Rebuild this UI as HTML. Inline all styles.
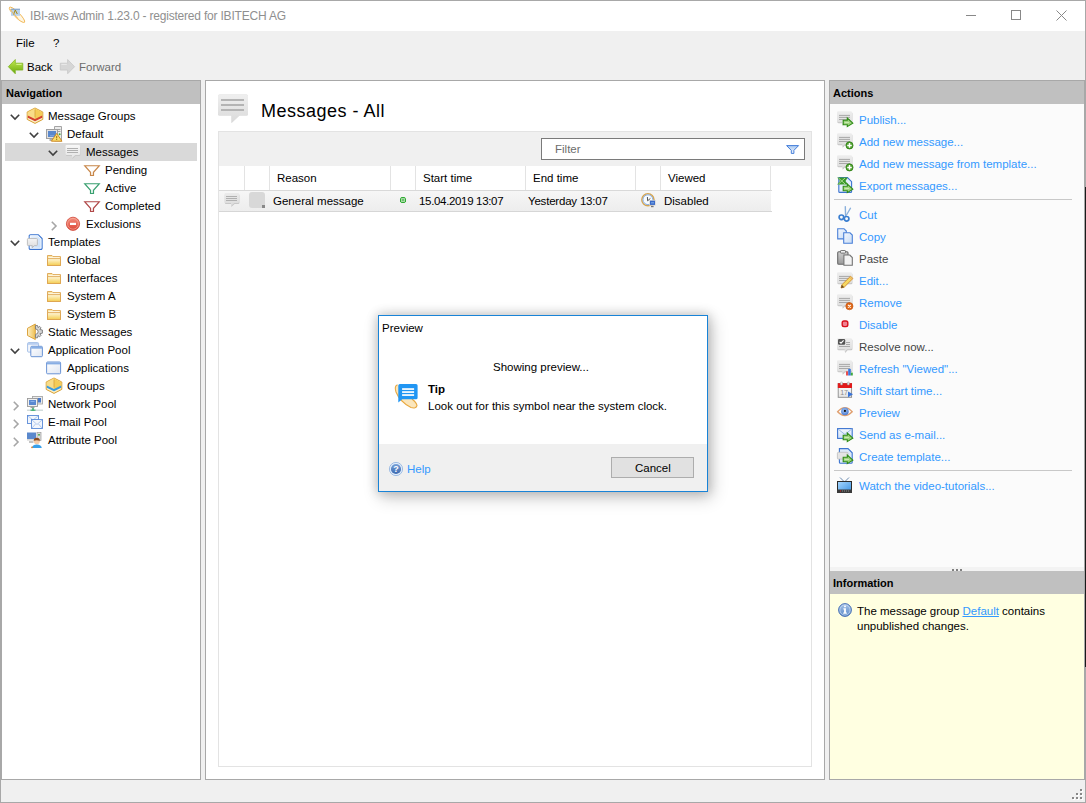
<!DOCTYPE html>
<html><head><meta charset="utf-8"><style>
html,body{margin:0;padding:0;}
body{width:1086px;height:803px;position:relative;overflow:hidden;background:#f0f0f0;font-family:"Liberation Sans", sans-serif;}
.t{position:absolute;white-space:pre;height:14px;}
svg{overflow:visible}
</style></head><body>
<div style="position:absolute;left:0px;top:0px;width:1086px;height:803px;box-sizing:border-box;border:1px solid #a8a8a8;background:#f0f0f0"></div><div style="position:absolute;left:1px;top:1px;width:1084px;height:30px;background:#fff"></div><svg style="position:absolute;left:9px;top:7px" width="16" height="16" viewBox="0 0 16 16"><ellipse cx="8" cy="7.8" rx="10.6" ry="2.6" transform="rotate(45 8 7.8)" fill="#fef6e4" stroke="#f0b550" stroke-width="0.9"/>
<rect x="2" y="1.8" width="9" height="7" fill="#b4d0ee" opacity="0.95"/><rect x="2" y="1.8" width="9" height="0.8" fill="#7090b8"/>
<path d="M4.5 7.5 L6.3 3 L8.3 7" fill="none" stroke="#a88a10" stroke-width="1"/>
<path d="M1.2 2.2 Q3.5 6 9 11.5" fill="none" stroke="#f0b550" stroke-width="0.9"/></svg><div class="t" style="left:30px;top:9px;font-size:12px;line-height:14px;color:#8f8f8f;font-weight:400;letter-spacing:-0.2px">IBI-aws Admin 1.23.0 - registered for IBITECH AG</div><div style="position:absolute;left:966px;top:15px;width:10px;height:1px;background:#888"></div><div style="position:absolute;left:1011px;top:10px;width:10px;height:10px;box-sizing:border-box;border:1px solid #888"></div><svg style="position:absolute;left:1056px;top:10px" width="11" height="11" viewBox="0 0 11 11"><path d="M0.5 0.5 L10.5 10.5 M10.5 0.5 L0.5 10.5" stroke="#888" stroke-width="1"/></svg><div class="t" style="left:16px;top:36px;font-size:11.5px;line-height:14px;color:#000;font-weight:400;">File</div><div class="t" style="left:53px;top:36px;font-size:11.5px;line-height:14px;color:#000;font-weight:400;">?</div><svg style="position:absolute;left:8px;top:59px" width="16" height="16" viewBox="0 0 16 16"><defs><linearGradient id="bag" x1="0" y1="0" x2="0" y2="1"><stop offset="0" stop-color="#c4ea50"/><stop offset="1" stop-color="#6aaa10"/></linearGradient></defs>
<path d="M0.3 7.7 L7.3 0.5 V4.2 H14.8 V11.1 H7.3 V14.8Z" fill="url(#bag)" stroke="#78b018" stroke-width="0.7" stroke-linejoin="round"/>
<path d="M8.3 5.4 H13.6" stroke="#e0f8a0" stroke-width="0.9"/></svg><div class="t" style="left:27px;top:60px;font-size:11.5px;line-height:14px;color:#000;font-weight:400;">Back</div><svg style="position:absolute;left:60px;top:59px" width="16" height="16" viewBox="0 0 16 16"><path d="M14.6 7.7 L7.6 0.5 V4.2 H0.3 V11.1 H7.6 V14.8Z" fill="#d6d6d6" stroke="#c4c4c4" stroke-width="0.7" stroke-linejoin="round"/>
<path d="M1.4 5.4 H6.8" stroke="#ececec" stroke-width="0.9"/></svg><div class="t" style="left:79px;top:60px;font-size:11.5px;line-height:14px;color:#6d6d6d;font-weight:400;">Forward</div><div style="position:absolute;left:1px;top:80px;width:200px;height:700px;box-sizing:border-box;border:1px solid #a8a8a8;background:#fff"></div><div style="position:absolute;left:2px;top:81px;width:198px;height:23px;background:#c0c0c0"></div><div class="t" style="left:6px;top:86px;font-size:11px;line-height:14px;color:#000;font-weight:700;">Navigation</div><svg style="position:absolute;left:10.0px;top:113.5px" width="10" height="6" viewBox="0 0 10 6"><path d="M0.8 0.8 L5 5 L9.2 0.8" fill="none" stroke="#404040" stroke-width="1.6"/></svg><svg style="position:absolute;left:27px;top:107px" width="16" height="17" viewBox="0 0 16 17"><path d="M8 1 L15.8 5 V12.4 L8 16.4 L0.2 12.4 V5Z" fill="#fcefc4" stroke="#d8a238" stroke-width="1"/>
<path d="M8 1.6 L15.2 5.3 V9.6 L8 13.1 L0.8 9.6 V5.3Z" fill="#f5cc58"/>
<path d="M8 1.6 L0.8 5.3 V9.6 L8 13.1Z" fill="#f8dc88"/>
<path d="M0.8 8.6 L8 12 L15.2 8.6 V10.8 L8 14.2 L0.8 10.8Z" fill="#d4402e"/>
<path d="M8 2.5 V10.5" stroke="#d49a30" stroke-width="0.7"/></svg><div class="t" style="left:48px;top:109px;font-size:11.5px;line-height:14px;color:#000;font-weight:400;">Message Groups</div><svg style="position:absolute;left:29.0px;top:131.5px" width="10" height="6" viewBox="0 0 10 6"><path d="M0.8 0.8 L5 5 L9.2 0.8" fill="none" stroke="#404040" stroke-width="1.6"/></svg><svg style="position:absolute;left:46px;top:125px" width="16" height="17" viewBox="0 0 16 17"><path d="M8.5 1.5 H15.5 V16 H8.5Z" fill="#ececec" stroke="#a4a4a4" stroke-width="1"/>
<rect x="10" y="4" width="4.5" height="0.9" fill="#9a9a9a"/><rect x="10" y="6" width="4.5" height="0.9" fill="#9a9a9a"/>
<rect x="0.5" y="4.5" width="11" height="9" fill="#e2e2e2" stroke="#a0a0a0" stroke-width="1"/>
<rect x="2" y="6" width="8" height="6" fill="#5a88cc"/><rect x="4" y="10.5" width="4" height="0.7" fill="#9ab8e8"/>
<path d="M3.5 15 h2.5" stroke="#7a7a7a" stroke-width="1.2"/>
<path d="M10.7 8.4 L16 16.2 H5.4Z" fill="#fbe06a" stroke="#d08a28" stroke-width="1" stroke-linejoin="round"/>
<rect x="10.2" y="11" width="1" height="2.4" fill="#9a6a10"/><rect x="10.2" y="14" width="1" height="1" fill="#9a6a10"/>
<circle cx="13.6" cy="9.2" r="1" fill="#3aa83a"/></svg><div class="t" style="left:67px;top:127px;font-size:11.5px;line-height:14px;color:#000;font-weight:400;">Default</div><div style="position:absolute;left:5px;top:143px;width:192px;height:18px;background:#d9d9d9"></div><svg style="position:absolute;left:48.0px;top:149.5px" width="10" height="6" viewBox="0 0 10 6"><path d="M0.8 0.8 L5 5 L9.2 0.8" fill="none" stroke="#404040" stroke-width="1.6"/></svg><svg style="position:absolute;left:65px;top:144px" width="16" height="16" viewBox="0 0 16 16"><defs><linearGradient id="bggl" x1="0" y1="0" x2="0" y2="1"><stop offset="0" stop-color="#f8f8f8"/><stop offset="1" stop-color="#e4e4e4"/></linearGradient>
<filter id="bgs" x="-30%" y="-30%" width="160%" height="160%"><feGaussianBlur stdDeviation="0.7"/></filter></defs>
<path d="M1.8 1.5 h12 a1.3 1.3 0 0 1 1.3 1.3 v7.4 a1.3 1.3 0 0 1 -1.3 1.3 h-3.5 l-3.3 3 v-3 h-5.2 a1.3 1.3 0 0 1 -1.3 -1.3 v-7.4 a1.3 1.3 0 0 1 1.3 -1.3z" fill="#c8c8c8" filter="url(#bgs)" transform="translate(0.3,0.6)"/>
<path d="M1.8 1 h12 a1.3 1.3 0 0 1 1.3 1.3 v7.4 a1.3 1.3 0 0 1 -1.3 1.3 h-3.5 l-3.3 3 v-3 h-5.2 a1.3 1.3 0 0 1 -1.3 -1.3 v-7.4 a1.3 1.3 0 0 1 1.3 -1.3z" fill="url(#bggl)"/>
<rect x="2" y="4" width="11" height="1" fill="#b0b0b0"/><rect x="2" y="6" width="11" height="1" fill="#b0b0b0"/><rect x="2" y="8" width="11" height="1" fill="#b0b0b0"/></svg><div class="t" style="left:86px;top:145px;font-size:11.5px;line-height:14px;color:#000;font-weight:400;">Messages</div><svg style="position:absolute;left:84px;top:165px" width="16" height="12" viewBox="0 0 16 12"><defs><linearGradient id="fg165" x1="0" y1="0" x2="1" y2="1"><stop offset="0.5" stop-color="#ffffff"/><stop offset="1" stop-color="#e8c8a8"/></linearGradient></defs>
<path d="M0.7 0.7 H15.3 L9.5 7.3 V10.5 H6.5 V7.3 Z" fill="url(#fg165)" stroke="#c8874a" stroke-width="1.15" stroke-linejoin="miter"/></svg><div class="t" style="left:105px;top:163px;font-size:11.5px;line-height:14px;color:#000;font-weight:400;">Pending</div><svg style="position:absolute;left:84px;top:183px" width="16" height="12" viewBox="0 0 16 12"><defs><linearGradient id="fg183" x1="0" y1="0" x2="1" y2="1"><stop offset="0.5" stop-color="#ffffff"/><stop offset="1" stop-color="#a8e0c8"/></linearGradient></defs>
<path d="M0.7 0.7 H15.3 L9.5 7.3 V10.5 H6.5 V7.3 Z" fill="url(#fg183)" stroke="#3aa070" stroke-width="1.15" stroke-linejoin="miter"/></svg><div class="t" style="left:105px;top:181px;font-size:11.5px;line-height:14px;color:#000;font-weight:400;">Active</div><svg style="position:absolute;left:84px;top:201px" width="16" height="12" viewBox="0 0 16 12"><defs><linearGradient id="fg201" x1="0" y1="0" x2="1" y2="1"><stop offset="0.5" stop-color="#ffffff"/><stop offset="1" stop-color="#e8b0b0"/></linearGradient></defs>
<path d="M0.7 0.7 H15.3 L9.5 7.3 V10.5 H6.5 V7.3 Z" fill="url(#fg201)" stroke="#b04848" stroke-width="1.15" stroke-linejoin="miter"/></svg><div class="t" style="left:105px;top:199px;font-size:11.5px;line-height:14px;color:#000;font-weight:400;">Completed</div><svg style="position:absolute;left:50.5px;top:220.5px" width="6" height="10" viewBox="0 0 6 10"><path d="M0.8 0.8 L5 5 L0.8 9.2" fill="none" stroke="#a6a6a6" stroke-width="1.6"/></svg><svg style="position:absolute;left:65px;top:216px" width="16" height="16" viewBox="0 0 16 16"><defs><linearGradient id="exg" x1="0" y1="0" x2="0" y2="1"><stop offset="0" stop-color="#f49080"/><stop offset="1" stop-color="#dc4434"/></linearGradient></defs>
<circle cx="8" cy="7.8" r="6.6" fill="url(#exg)" stroke="#d04838" stroke-width="0.8"/><circle cx="8" cy="7.8" r="5.4" fill="none" stroke="#f8b8a8" stroke-width="0.6"/>
<rect x="5" y="6.8" width="6" height="2.2" fill="#fff"/></svg><div class="t" style="left:86px;top:217px;font-size:11.5px;line-height:14px;color:#000;font-weight:400;">Exclusions</div><svg style="position:absolute;left:10.0px;top:239.5px" width="10" height="6" viewBox="0 0 10 6"><path d="M0.8 0.8 L5 5 L9.2 0.8" fill="none" stroke="#404040" stroke-width="1.6"/></svg><svg style="position:absolute;left:27px;top:234px" width="16" height="16" viewBox="0 0 16 16"><defs><linearGradient id="tpg" x1="0" y1="0" x2="1" y2="1"><stop offset="0" stop-color="#e8f2fe"/><stop offset="1" stop-color="#c4dcf8"/></linearGradient>
<linearGradient id="tpb" x1="0" y1="0" x2="0" y2="1"><stop offset="0" stop-color="#f4f4f4"/><stop offset="1" stop-color="#dcdcdc"/></linearGradient></defs>
<path d="M3.2 0.7 H11.3 L15.1 4.5 V14.2 a1.2 1.2 0 0 1 -1.2 1.2 H3.4 a1.2 1.2 0 0 1 -1.2 -1.2 V1.9 a1.2 1.2 0 0 1 1.2 -1.2Z" fill="url(#tpg)" stroke="#3a74d0" stroke-width="1.1"/>
<path d="M3.3 1.8 H10.8 L14 5 V14.2 H3.3Z" fill="none" stroke="#ffffff" stroke-width="0.7"/>
<path d="M1.3 4.5 h8.2 a0.9 0.9 0 0 1 0.9 0.9 v5.3 a0.9 0.9 0 0 1 -0.9 0.9 h-2.2 l-2 2.2 v-2.2 h-4 a0.9 0.9 0 0 1 -0.9 -0.9 v-5.3 a0.9 0.9 0 0 1 0.9 -0.9z" fill="url(#tpb)" stroke="#b4b4b4" stroke-width="0.8"/></svg><div class="t" style="left:48px;top:235px;font-size:11.5px;line-height:14px;color:#000;font-weight:400;">Templates</div><svg style="position:absolute;left:47px;top:254px" width="16" height="16" viewBox="0 0 16 16"><defs><linearGradient id="fold" x1="0" y1="0" x2="0" y2="1"><stop offset="0" stop-color="#fff8dc"/><stop offset="1" stop-color="#f4cc50"/></linearGradient></defs>
<path d="M0.5 1.5 H5 L6 2.6 H13.5 V11.5 H0.5Z" fill="#fbe6a8" stroke="#dca450" stroke-width="0.9"/>
<path d="M0.5 4.6 H13.5 V11.5 H0.5Z" fill="url(#fold)" stroke="#dca450" stroke-width="0.9"/>
<path d="M1.5 3.6 H12.5" stroke="#fffaf0" stroke-width="0.8"/></svg><div class="t" style="left:67px;top:253px;font-size:11.5px;line-height:14px;color:#000;font-weight:400;">Global</div><svg style="position:absolute;left:47px;top:272px" width="16" height="16" viewBox="0 0 16 16"><defs><linearGradient id="fold" x1="0" y1="0" x2="0" y2="1"><stop offset="0" stop-color="#fff8dc"/><stop offset="1" stop-color="#f4cc50"/></linearGradient></defs>
<path d="M0.5 1.5 H5 L6 2.6 H13.5 V11.5 H0.5Z" fill="#fbe6a8" stroke="#dca450" stroke-width="0.9"/>
<path d="M0.5 4.6 H13.5 V11.5 H0.5Z" fill="url(#fold)" stroke="#dca450" stroke-width="0.9"/>
<path d="M1.5 3.6 H12.5" stroke="#fffaf0" stroke-width="0.8"/></svg><div class="t" style="left:67px;top:271px;font-size:11.5px;line-height:14px;color:#000;font-weight:400;">Interfaces</div><svg style="position:absolute;left:47px;top:290px" width="16" height="16" viewBox="0 0 16 16"><defs><linearGradient id="fold" x1="0" y1="0" x2="0" y2="1"><stop offset="0" stop-color="#fff8dc"/><stop offset="1" stop-color="#f4cc50"/></linearGradient></defs>
<path d="M0.5 1.5 H5 L6 2.6 H13.5 V11.5 H0.5Z" fill="#fbe6a8" stroke="#dca450" stroke-width="0.9"/>
<path d="M0.5 4.6 H13.5 V11.5 H0.5Z" fill="url(#fold)" stroke="#dca450" stroke-width="0.9"/>
<path d="M1.5 3.6 H12.5" stroke="#fffaf0" stroke-width="0.8"/></svg><div class="t" style="left:67px;top:289px;font-size:11.5px;line-height:14px;color:#000;font-weight:400;">System A</div><svg style="position:absolute;left:47px;top:308px" width="16" height="16" viewBox="0 0 16 16"><defs><linearGradient id="fold" x1="0" y1="0" x2="0" y2="1"><stop offset="0" stop-color="#fff8dc"/><stop offset="1" stop-color="#f4cc50"/></linearGradient></defs>
<path d="M0.5 1.5 H5 L6 2.6 H13.5 V11.5 H0.5Z" fill="#fbe6a8" stroke="#dca450" stroke-width="0.9"/>
<path d="M0.5 4.6 H13.5 V11.5 H0.5Z" fill="url(#fold)" stroke="#dca450" stroke-width="0.9"/>
<path d="M1.5 3.6 H12.5" stroke="#fffaf0" stroke-width="0.8"/></svg><div class="t" style="left:67px;top:307px;font-size:11.5px;line-height:14px;color:#000;font-weight:400;">System B</div><svg style="position:absolute;left:27px;top:323px" width="16" height="17" viewBox="0 0 16 17"><defs><linearGradient id="smg" x1="0" y1="0" x2="1" y2="0"><stop offset="0" stop-color="#fdf0c8"/><stop offset="1" stop-color="#f0c050"/></linearGradient></defs>
<path d="M8.3 1 L0.5 5.3 V12.5 L8.3 16.5Z" fill="url(#smg)" stroke="#dca440" stroke-width="1"/>
<path d="M8.5 2.5 L10.5 2.5 L11 4.6 L12.6 3.4 L14 4.8 L12.9 6.5 L15.4 7 V10.2 L12.9 10.7 L14 12.4 L12.6 13.8 L11 12.7 L10.5 14.8 H8.5 V11.3 A2.6 2.6 0 0 0 8.5 6Z" fill="#d4d4d4" stroke="#7a7a7a" stroke-width="0.9" stroke-linejoin="round"/></svg><div class="t" style="left:48px;top:325px;font-size:11.5px;line-height:14px;color:#000;font-weight:400;">Static Messages</div><svg style="position:absolute;left:10.0px;top:347.5px" width="10" height="6" viewBox="0 0 10 6"><path d="M0.8 0.8 L5 5 L9.2 0.8" fill="none" stroke="#404040" stroke-width="1.6"/></svg><svg style="position:absolute;left:27px;top:342px" width="16" height="16" viewBox="0 0 16 16"><defs><linearGradient id="apg2" x1="0" y1="0" x2="1" y2="1"><stop offset="0" stop-color="#ffffff"/><stop offset="1" stop-color="#dfe6f2"/></linearGradient></defs>
<rect x="0.6" y="0.6" width="11" height="9.5" rx="1" fill="#f4f7fc" stroke="#9ab8e4" stroke-width="0.9"/><rect x="1" y="1" width="10.2" height="1.8" fill="#b8cef0"/>
<rect x="3.8" y="4.3" width="11.6" height="10.4" rx="1" fill="url(#apg2)" stroke="#5a88d0" stroke-width="0.9"/><rect x="4.2" y="4.7" width="10.8" height="2" fill="#88aee4"/></svg><div class="t" style="left:48px;top:343px;font-size:11.5px;line-height:14px;color:#000;font-weight:400;">Application Pool</div><svg style="position:absolute;left:46px;top:360px" width="16" height="16" viewBox="0 0 16 16"><defs><linearGradient id="apg" x1="0" y1="0" x2="1" y2="1"><stop offset="0" stop-color="#ffffff"/><stop offset="1" stop-color="#dfe6f2"/></linearGradient></defs>
<rect x="0.6" y="2" width="14" height="11.8" rx="1" fill="url(#apg)" stroke="#5a88d0" stroke-width="0.9"/><rect x="1" y="2.4" width="13.2" height="2" fill="#88aee4"/></svg><div class="t" style="left:67px;top:361px;font-size:11.5px;line-height:14px;color:#000;font-weight:400;">Applications</div><svg style="position:absolute;left:46px;top:377px" width="16" height="17" viewBox="0 0 16 17"><path d="M8 1 L15.8 5 V12.4 L8 16.4 L0.2 12.4 V5Z" fill="#fcefc4" stroke="#d8a238" stroke-width="1"/>
<path d="M8 1.6 L15.2 5.3 V9.6 L8 13.1 L0.8 9.6 V5.3Z" fill="#f5cc58"/>
<path d="M8 1.6 L0.8 5.3 V9.6 L8 13.1Z" fill="#f8dc88"/>
<path d="M0.8 8.6 L8 12 L15.2 8.6 V10.8 L8 14.2 L0.8 10.8Z" fill="#3a9ae0"/>
<path d="M8 2.5 V10.5" stroke="#d49a30" stroke-width="0.7"/></svg><div class="t" style="left:67px;top:379px;font-size:11.5px;line-height:14px;color:#000;font-weight:400;">Groups</div><svg style="position:absolute;left:12.5px;top:400.5px" width="6" height="10" viewBox="0 0 6 10"><path d="M0.8 0.8 L5 5 L0.8 9.2" fill="none" stroke="#a6a6a6" stroke-width="1.6"/></svg><svg style="position:absolute;left:27px;top:396px" width="16" height="16" viewBox="0 0 16 16"><rect x="5.5" y="0.5" width="10" height="7.5" fill="#ececec" stroke="#a8a8a8" stroke-width="0.9"/><rect x="7" y="2" width="7" height="4.5" fill="#4a7ac8"/>
<rect x="0.5" y="2.5" width="10" height="8" fill="#f0f0f0" stroke="#9a9a9a" stroke-width="0.9"/><rect x="2" y="4" width="7" height="5" fill="#5a88d0"/><rect x="3.5" y="5" width="4" height="1" fill="#8ab0e8"/>
<path d="M3.5 11.6 h4" stroke="#9a9a9a" stroke-width="1"/>
<rect x="0" y="13.6" width="16" height="1.2" fill="#c8d4d4"/><rect x="5.2" y="11.8" width="1.6" height="3" fill="#40b070"/><rect x="3.5" y="13.6" width="5" height="1.2" fill="#40b070"/></svg><div class="t" style="left:48px;top:397px;font-size:11.5px;line-height:14px;color:#000;font-weight:400;">Network Pool</div><svg style="position:absolute;left:12.5px;top:418.5px" width="6" height="10" viewBox="0 0 6 10"><path d="M0.8 0.8 L5 5 L0.8 9.2" fill="none" stroke="#a6a6a6" stroke-width="1.6"/></svg><svg style="position:absolute;left:27px;top:414px" width="16" height="16" viewBox="0 0 16 16"><rect x="0.5" y="1.5" width="11" height="8" fill="#f2f6fc" stroke="#5a8ad8" stroke-width="0.9"/><path d="M1 2 L6 6 L11 2" fill="none" stroke="#a8c4ec" stroke-width="0.9"/>
<rect x="4.5" y="5.5" width="11" height="9" fill="#f2f6fc" stroke="#5a8ad8" stroke-width="0.9"/><path d="M5 6 L10 10.5 L15 6 M5 14 L8.5 10 M15 14 L11.5 10" fill="none" stroke="#a8c4ec" stroke-width="0.9"/></svg><div class="t" style="left:48px;top:415px;font-size:11.5px;line-height:14px;color:#000;font-weight:400;">E-mail Pool</div><svg style="position:absolute;left:12.5px;top:436.5px" width="6" height="10" viewBox="0 0 6 10"><path d="M0.8 0.8 L5 5 L0.8 9.2" fill="none" stroke="#a6a6a6" stroke-width="1.6"/></svg><svg style="position:absolute;left:27px;top:432px" width="16" height="16" viewBox="0 0 16 16"><rect x="10" y="0.5" width="4" height="8" fill="#dcdcdc" stroke="#9a9a9a" stroke-width="0.7"/><rect x="11.2" y="2" width="1.6" height="1.6" fill="#40a840"/>
<rect x="0" y="0.5" width="9" height="6.5" fill="#5a88cc"/><rect x="0" y="7" width="9" height="1.6" fill="#d8d8d8"/><path d="M2 10 h4.5" stroke="#8a8a8a" stroke-width="1"/>
<circle cx="9.8" cy="9.3" r="3" fill="#f6cca8"/><path d="M6.7 8.8 a3.1 3 0 0 1 6.2 0 q-3.1 -1.1 -6.2 0z" fill="#8a4a20"/>
<path d="M4.8 16 q0.5 -3.6 5 -3.6 q4.5 0 5 3.6z" fill="#3aa0ea"/><circle cx="5" cy="15.3" r="0.9" fill="#e08030"/></svg><div class="t" style="left:48px;top:433px;font-size:11.5px;line-height:14px;color:#000;font-weight:400;">Attribute Pool</div><div style="position:absolute;left:205px;top:80px;width:620px;height:700px;box-sizing:border-box;border:1px solid #a8a8a8;background:#fff"></div><svg style="position:absolute;left:218px;top:94px" width="32" height="32" viewBox="0 0 32 32"><defs><linearGradient id="hb" x1="0" y1="0" x2="0" y2="1"><stop offset="0" stop-color="#efefef"/><stop offset="1" stop-color="#dadada"/></linearGradient>
<filter id="hsh" x="-20%" y="-20%" width="140%" height="140%"><feGaussianBlur stdDeviation="0.6"/></filter></defs>
<path d="M1.5 0.5 h27 a1.5 1.5 0 0 1 1.5 1.5 v18 a1.5 1.5 0 0 1 -1.5 1.5 h-7 l-8 7.5 v-7.5 h-12 a1.5 1.5 0 0 1 -1.5 -1.5 v-18 a1.5 1.5 0 0 1 1.5 -1.5z" fill="#d8d8d8" filter="url(#hsh)"/>
<path d="M1.5 0.5 h27 a1.5 1.5 0 0 1 1.5 1.5 v18 a1.5 1.5 0 0 1 -1.5 1.5 h-7 l-8 7.5 v-7.5 h-12 a1.5 1.5 0 0 1 -1.5 -1.5 v-18 a1.5 1.5 0 0 1 1.5 -1.5z" fill="url(#hb)"/>
<rect x="3" y="5" width="23" height="2" fill="#b4b4b4"/><rect x="3" y="10" width="23" height="2" fill="#b4b4b4"/><rect x="3" y="15" width="23" height="2" fill="#b4b4b4"/></svg><div class="t" style="left:261px;top:100px;font-size:18px;line-height:22px;color:#000;font-weight:400;letter-spacing:0.5px">Messages - All</div><div style="position:absolute;left:218px;top:131px;width:594px;height:636px;box-sizing:border-box;border:1px solid #e3e3e3;background:#fff"></div><div style="position:absolute;left:219px;top:132px;width:592px;height:34px;background:#f0f0f0"></div><div style="position:absolute;left:541px;top:138px;width:264px;height:22px;box-sizing:border-box;border:1px solid #7a7a7a;background:#fff"></div><div class="t" style="left:555px;top:142px;font-size:11.5px;line-height:14px;color:#6d6d6d;font-weight:400;">Filter</div><svg style="position:absolute;left:786px;top:145px" width="14" height="10" viewBox="0 0 14 10"><defs><linearGradient id="ffg" x1="0" y1="0" x2="0" y2="1"><stop offset="0" stop-color="#a8c8f0"/><stop offset="1" stop-color="#f4f8fe"/></linearGradient></defs>
<path d="M0.6 0.6 H12.6 L7.9 5.4 V8.4 H5.3 V5.4Z" fill="url(#ffg)" stroke="#3c78d8" stroke-width="0.95" stroke-linejoin="round"/></svg><div style="position:absolute;left:219px;top:166px;width:552px;height:24px;background:#fff"></div><div style="position:absolute;left:219px;top:190px;width:553px;height:1px;background:#d9d9d9"></div><div style="position:absolute;left:244px;top:166px;width:1px;height:24px;background:#e3e3e3"></div><div style="position:absolute;left:269px;top:166px;width:1px;height:24px;background:#e3e3e3"></div><div style="position:absolute;left:390px;top:166px;width:1px;height:24px;background:#e3e3e3"></div><div style="position:absolute;left:415px;top:166px;width:1px;height:24px;background:#e3e3e3"></div><div style="position:absolute;left:525px;top:166px;width:1px;height:24px;background:#e3e3e3"></div><div style="position:absolute;left:635px;top:166px;width:1px;height:24px;background:#e3e3e3"></div><div style="position:absolute;left:660px;top:166px;width:1px;height:24px;background:#e3e3e3"></div><div style="position:absolute;left:770px;top:166px;width:1px;height:24px;background:#e3e3e3"></div><div class="t" style="left:277px;top:171px;font-size:11.5px;line-height:14px;color:#000;font-weight:400;">Reason</div><div class="t" style="left:423px;top:171px;font-size:11.5px;line-height:14px;color:#000;font-weight:400;">Start time</div><div class="t" style="left:533px;top:171px;font-size:11.5px;line-height:14px;color:#000;font-weight:400;">End time</div><div class="t" style="left:668px;top:171px;font-size:11.5px;line-height:14px;color:#000;font-weight:400;">Viewed</div><div style="position:absolute;left:219px;top:191px;width:552px;height:20px;background:linear-gradient(#f6f6f6,#ededed)"></div><div style="position:absolute;left:219px;top:211px;width:553px;height:1px;background:#d6d6d6"></div><svg style="position:absolute;left:224px;top:192px" width="16" height="16" viewBox="0 0 16 16"><defs><linearGradient id="bgg" x1="0" y1="0" x2="0" y2="1"><stop offset="0" stop-color="#ebebeb"/><stop offset="1" stop-color="#dadada"/></linearGradient>
<filter id="bgs" x="-30%" y="-30%" width="160%" height="160%"><feGaussianBlur stdDeviation="0.7"/></filter></defs>
<path d="M1.8 1.5 h12 a1.3 1.3 0 0 1 1.3 1.3 v7.4 a1.3 1.3 0 0 1 -1.3 1.3 h-3.5 l-3.3 3 v-3 h-5.2 a1.3 1.3 0 0 1 -1.3 -1.3 v-7.4 a1.3 1.3 0 0 1 1.3 -1.3z" fill="#c8c8c8" filter="url(#bgs)" transform="translate(0.3,0.6)"/>
<path d="M1.8 1 h12 a1.3 1.3 0 0 1 1.3 1.3 v7.4 a1.3 1.3 0 0 1 -1.3 1.3 h-3.5 l-3.3 3 v-3 h-5.2 a1.3 1.3 0 0 1 -1.3 -1.3 v-7.4 a1.3 1.3 0 0 1 1.3 -1.3z" fill="url(#bgg)"/>
<rect x="2" y="4" width="11" height="1" fill="#b0b0b0"/><rect x="2" y="6" width="11" height="1" fill="#b0b0b0"/><rect x="2" y="8" width="11" height="1" fill="#b0b0b0"/></svg><svg style="position:absolute;left:249px;top:192px" width="16" height="16" viewBox="0 0 16 16"><rect x="0" y="0" width="16" height="16" rx="3" fill="#d8d8d8"/><rect x="13" y="13" width="3" height="3" fill="#888"/></svg><svg style="position:absolute;left:400px;top:197px" width="6" height="6" viewBox="0 0 6 6"><path d="M1.5 0 H4.5 L6 1.5 V4.5 L4.5 6 H1.5 L0 4.5 V1.5Z" fill="#2eaa30"/><rect x="1" y="1" width="4" height="4" rx="0.5" fill="#a6d8a6"/><rect x="2" y="2" width="2" height="2" fill="#70c070"/></svg><svg style="position:absolute;left:641px;top:192px" width="16" height="16" viewBox="0 0 16 16"><circle cx="6.9" cy="7.7" r="6.1" fill="#f8fcff" stroke="#d4a450" stroke-width="1.4"/><circle cx="6.9" cy="7.7" r="4.9" fill="none" stroke="#6a9ae0" stroke-width="0.8"/>
<path d="M6.4 5 L6.6 8.8 L9.4 6.4" fill="none" stroke="#555" stroke-width="1"/>
<rect x="8.3" y="8" width="6.4" height="5.6" fill="#d8d8d8"/><rect x="9" y="8.7" width="5" height="4.2" fill="#3a6ac8"/><rect x="10" y="10" width="3" height="1.5" fill="#6a9ae0"/>
<rect x="10" y="13.8" width="2.6" height="1.4" fill="#777"/></svg><div class="t" style="left:273px;top:194px;font-size:11.5px;line-height:14px;color:#000;font-weight:400;">General message</div><div class="t" style="left:419px;top:194px;font-size:11.5px;line-height:14px;color:#000;font-weight:400;letter-spacing:-0.33px">15.04.2019 13:07</div><div class="t" style="left:528px;top:194px;font-size:11.5px;line-height:14px;color:#000;font-weight:400;letter-spacing:-0.2px">Yesterday 13:07</div><div class="t" style="left:664px;top:194px;font-size:11.5px;line-height:14px;color:#000;font-weight:400;">Disabled</div><div style="position:absolute;left:829px;top:80px;width:256px;height:700px;box-sizing:border-box;border:1px solid #a8a8a8;background:#fbfbfb"></div><div style="position:absolute;left:830px;top:81px;width:254px;height:23px;background:#c0c0c0"></div><div class="t" style="left:833px;top:86px;font-size:11px;line-height:14px;color:#000;font-weight:700;">Actions</div><svg style="position:absolute;left:837px;top:111px" width="16" height="16" viewBox="0 0 16 16"><defs><filter id="abs" x="-30%" y="-30%" width="160%" height="160%"><feGaussianBlur stdDeviation="0.6"/></filter>
<linearGradient id="abg" x1="0" y1="0" x2="0" y2="1"><stop offset="0" stop-color="#eeeeee"/><stop offset="1" stop-color="#dcdcdc"/></linearGradient></defs>
<path d="M1.3 0.5 h12.4 a1.3 1.3 0 0 1 1.3 1.3 v8.4 a1.3 1.3 0 0 1 -1.3 1.3 h-6 l-2.5 2.5 v-2.5 h-3.9 a1.3 1.3 0 0 1 -1.3 -1.3 v-8.4 a1.3 1.3 0 0 1 1.3 -1.3z" fill="#c4c4c4" filter="url(#abs)" transform="translate(0.4,0.7)"/>
<path d="M1.3 0.2 h12.4 a1.3 1.3 0 0 1 1.3 1.3 v8.4 a1.3 1.3 0 0 1 -1.3 1.3 h-6 l-2.5 2.5 v-2.5 h-3.9 a1.3 1.3 0 0 1 -1.3 -1.3 v-8.4 a1.3 1.3 0 0 1 1.3 -1.3z" fill="url(#abg)"/>
<rect x="2" y="3.9" width="11" height="1" fill="#a8a8a8"/><rect x="2" y="5.9" width="11" height="1" fill="#a8a8a8"/><rect x="2" y="8" width="11" height="1" fill="#a8a8a8"/><path d="M6.2 9.2 H10.3 V7 L15.8 12.2 L10.3 15.6 V13.8 H6.2Z" fill="#9ed27e" stroke="#2e8c14" stroke-width="1.1" stroke-linejoin="miter"/>
<path d="M7.5 11.5 H12" stroke="#c8eab0" stroke-width="1"/></svg><div class="t" style="left:859px;top:113px;font-size:11.5px;line-height:14px;color:#3399ff;font-weight:400;">Publish...</div><svg style="position:absolute;left:837px;top:133px" width="16" height="16" viewBox="0 0 16 16"><defs><filter id="abs" x="-30%" y="-30%" width="160%" height="160%"><feGaussianBlur stdDeviation="0.6"/></filter>
<linearGradient id="abg" x1="0" y1="0" x2="0" y2="1"><stop offset="0" stop-color="#eeeeee"/><stop offset="1" stop-color="#dcdcdc"/></linearGradient></defs>
<path d="M1.3 0.5 h12.4 a1.3 1.3 0 0 1 1.3 1.3 v8.4 a1.3 1.3 0 0 1 -1.3 1.3 h-6 l-2.5 2.5 v-2.5 h-3.9 a1.3 1.3 0 0 1 -1.3 -1.3 v-8.4 a1.3 1.3 0 0 1 1.3 -1.3z" fill="#c4c4c4" filter="url(#abs)" transform="translate(0.4,0.7)"/>
<path d="M1.3 0.2 h12.4 a1.3 1.3 0 0 1 1.3 1.3 v8.4 a1.3 1.3 0 0 1 -1.3 1.3 h-6 l-2.5 2.5 v-2.5 h-3.9 a1.3 1.3 0 0 1 -1.3 -1.3 v-8.4 a1.3 1.3 0 0 1 1.3 -1.3z" fill="url(#abg)"/>
<rect x="2" y="3.9" width="11" height="1" fill="#a8a8a8"/><rect x="2" y="5.9" width="11" height="1" fill="#a8a8a8"/><rect x="2" y="8" width="11" height="1" fill="#a8a8a8"/><circle cx="12.5" cy="12.4" r="3.6" fill="#4ea02c" stroke="#2a7a12" stroke-width="0.7"/><path d="M12.5 10.1 V14.7 M10.2 12.4 H14.8" stroke="#fff" stroke-width="1.5"/></svg><div class="t" style="left:859px;top:135px;font-size:11.5px;line-height:14px;color:#3399ff;font-weight:400;">Add new message...</div><svg style="position:absolute;left:837px;top:155px" width="16" height="16" viewBox="0 0 16 16"><defs><filter id="abs" x="-30%" y="-30%" width="160%" height="160%"><feGaussianBlur stdDeviation="0.6"/></filter>
<linearGradient id="abg" x1="0" y1="0" x2="0" y2="1"><stop offset="0" stop-color="#eeeeee"/><stop offset="1" stop-color="#dcdcdc"/></linearGradient></defs>
<path d="M1.3 0.5 h12.4 a1.3 1.3 0 0 1 1.3 1.3 v8.4 a1.3 1.3 0 0 1 -1.3 1.3 h-6 l-2.5 2.5 v-2.5 h-3.9 a1.3 1.3 0 0 1 -1.3 -1.3 v-8.4 a1.3 1.3 0 0 1 1.3 -1.3z" fill="#c4c4c4" filter="url(#abs)" transform="translate(0.4,0.7)"/>
<path d="M1.3 0.2 h12.4 a1.3 1.3 0 0 1 1.3 1.3 v8.4 a1.3 1.3 0 0 1 -1.3 1.3 h-6 l-2.5 2.5 v-2.5 h-3.9 a1.3 1.3 0 0 1 -1.3 -1.3 v-8.4 a1.3 1.3 0 0 1 1.3 -1.3z" fill="url(#abg)"/>
<rect x="2" y="3.9" width="11" height="1" fill="#a8a8a8"/><rect x="2" y="5.9" width="11" height="1" fill="#a8a8a8"/><rect x="2" y="8" width="11" height="1" fill="#a8a8a8"/><circle cx="12.5" cy="12.4" r="3.6" fill="#4ea02c" stroke="#2a7a12" stroke-width="0.7"/><path d="M12.5 10.1 V14.7 M10.2 12.4 H14.8" stroke="#fff" stroke-width="1.5"/></svg><div class="t" style="left:859px;top:157px;font-size:11.5px;line-height:14px;color:#3399ff;font-weight:400;">Add new message from template...</div><svg style="position:absolute;left:837px;top:177px" width="16" height="16" viewBox="0 0 16 16"><path d="M1.8 0.6 H10.5 L14.6 4.7 V14.4 a1 1 0 0 1 -1 1 H2.8 a1 1 0 0 1 -1 -1Z" fill="#e4eefc" stroke="#3c74d0" stroke-width="1.1"/>
<path d="M0.2 0.5 H10.8 L8.5 4 L11 7.4 H0.2 L3 4Z" fill="#3c9a2c"/><path d="M1.5 1 L8 7 M8 1 L1.5 7" stroke="#a8dc90" stroke-width="1"/><path d="M6.2 9.2 H10.3 V7 L15.8 12.2 L10.3 15.6 V13.8 H6.2Z" fill="#9ed27e" stroke="#2e8c14" stroke-width="1.1" stroke-linejoin="miter"/>
<path d="M7.5 11.5 H12" stroke="#c8eab0" stroke-width="1"/></svg><div class="t" style="left:859px;top:179px;font-size:11.5px;line-height:14px;color:#3399ff;font-weight:400;">Export messages...</div><div style="position:absolute;left:834px;top:199px;width:238px;height:1px;background:#c8c8c8"></div><svg style="position:absolute;left:837px;top:206px" width="16" height="16" viewBox="0 0 16 16"><path d="M8.3 0.6 L8.6 10.5" stroke="#8ab0dc" stroke-width="1.4" stroke-linecap="round"/><path d="M13.5 2.2 L9.5 9" stroke="#8ab0dc" stroke-width="1.3" stroke-linecap="round"/>
<circle cx="4.4" cy="11.3" r="2.3" fill="#fafafa" stroke="#3a7ed0" stroke-width="1.7"/><circle cx="9.6" cy="12.8" r="2.3" fill="#fafafa" stroke="#3a7ed0" stroke-width="1.7"/></svg><div class="t" style="left:859px;top:208px;font-size:11.5px;line-height:14px;color:#3399ff;font-weight:400;">Cut</div><svg style="position:absolute;left:837px;top:228px" width="16" height="16" viewBox="0 0 16 16"><defs><linearGradient id="cpg" x1="0" y1="0" x2="1" y2="1"><stop offset="0" stop-color="#f4f8fe"/><stop offset="1" stop-color="#c8dcf6"/></linearGradient></defs>
<path d="M0.7 0.7 H7 L9.3 3 V10.9 H0.7Z" fill="url(#cpg)" stroke="#4a80d8" stroke-width="1.1"/>
<path d="M6.7 4.8 H13 L15.3 7.1 V15.3 H6.7Z" fill="url(#cpg)" stroke="#4a80d8" stroke-width="1.1"/></svg><div class="t" style="left:859px;top:230px;font-size:11.5px;line-height:14px;color:#3399ff;font-weight:400;">Copy</div><svg style="position:absolute;left:837px;top:250px" width="16" height="16" viewBox="0 0 16 16"><defs><linearGradient id="psg" x1="0" y1="0" x2="0" y2="1"><stop offset="0" stop-color="#cfcfcf"/><stop offset="1" stop-color="#9a9a9a"/></linearGradient></defs>
<rect x="0.7" y="1.8" width="10.3" height="12.4" rx="1" fill="url(#psg)" stroke="#6a6a6a" stroke-width="1.1"/><rect x="3.5" y="0.5" width="5" height="2.6" rx="0.6" fill="#f0f0f0" stroke="#6a6a6a" stroke-width="0.9"/>
<path d="M6.9 5 H12.8 L15.3 7.5 V15.2 H6.9Z" fill="#f2f2f2" stroke="#737373" stroke-width="1.1"/></svg><div class="t" style="left:859px;top:252px;font-size:11.5px;line-height:14px;color:#444;font-weight:400;">Paste</div><svg style="position:absolute;left:837px;top:272px" width="16" height="16" viewBox="0 0 16 16"><defs><filter id="abs" x="-30%" y="-30%" width="160%" height="160%"><feGaussianBlur stdDeviation="0.6"/></filter>
<linearGradient id="abg" x1="0" y1="0" x2="0" y2="1"><stop offset="0" stop-color="#eeeeee"/><stop offset="1" stop-color="#dcdcdc"/></linearGradient></defs>
<path d="M1.3 0.5 h12.4 a1.3 1.3 0 0 1 1.3 1.3 v8.4 a1.3 1.3 0 0 1 -1.3 1.3 h-6 l-2.5 2.5 v-2.5 h-3.9 a1.3 1.3 0 0 1 -1.3 -1.3 v-8.4 a1.3 1.3 0 0 1 1.3 -1.3z" fill="#c4c4c4" filter="url(#abs)" transform="translate(0.4,0.7)"/>
<path d="M1.3 0.2 h12.4 a1.3 1.3 0 0 1 1.3 1.3 v8.4 a1.3 1.3 0 0 1 -1.3 1.3 h-6 l-2.5 2.5 v-2.5 h-3.9 a1.3 1.3 0 0 1 -1.3 -1.3 v-8.4 a1.3 1.3 0 0 1 1.3 -1.3z" fill="url(#abg)"/>
<rect x="2" y="3.9" width="11" height="1" fill="#a8a8a8"/><rect x="2" y="5.9" width="11" height="1" fill="#a8a8a8"/><rect x="2" y="8" width="11" height="1" fill="#a8a8a8"/><path d="M13.6 4.2 L15.9 6.5 L7.2 15.2 L4 16 L4.8 12.8Z" fill="#f6d860" stroke="#d08a30" stroke-width="0.9" stroke-linejoin="round"/><path d="M4 16 L4.8 12.8 L7.2 15.2Z" fill="#6a4a20"/><path d="M12.6 5.2 L14.9 7.5" stroke="#e8a070" stroke-width="1"/></svg><div class="t" style="left:859px;top:274px;font-size:11.5px;line-height:14px;color:#3399ff;font-weight:400;">Edit...</div><svg style="position:absolute;left:837px;top:294px" width="16" height="16" viewBox="0 0 16 16"><defs><filter id="abs" x="-30%" y="-30%" width="160%" height="160%"><feGaussianBlur stdDeviation="0.6"/></filter>
<linearGradient id="abg" x1="0" y1="0" x2="0" y2="1"><stop offset="0" stop-color="#eeeeee"/><stop offset="1" stop-color="#dcdcdc"/></linearGradient></defs>
<path d="M1.3 0.5 h12.4 a1.3 1.3 0 0 1 1.3 1.3 v8.4 a1.3 1.3 0 0 1 -1.3 1.3 h-6 l-2.5 2.5 v-2.5 h-3.9 a1.3 1.3 0 0 1 -1.3 -1.3 v-8.4 a1.3 1.3 0 0 1 1.3 -1.3z" fill="#c4c4c4" filter="url(#abs)" transform="translate(0.4,0.7)"/>
<path d="M1.3 0.2 h12.4 a1.3 1.3 0 0 1 1.3 1.3 v8.4 a1.3 1.3 0 0 1 -1.3 1.3 h-6 l-2.5 2.5 v-2.5 h-3.9 a1.3 1.3 0 0 1 -1.3 -1.3 v-8.4 a1.3 1.3 0 0 1 1.3 -1.3z" fill="url(#abg)"/>
<rect x="2" y="3.9" width="11" height="1" fill="#a8a8a8"/><rect x="2" y="5.9" width="11" height="1" fill="#a8a8a8"/><rect x="2" y="8" width="11" height="1" fill="#a8a8a8"/><circle cx="12.4" cy="12.2" r="3.6" fill="#e06a1a" stroke="#c05010" stroke-width="0.6"/><path d="M11 10.8 L13.8 13.6 M13.8 10.8 L11 13.6" stroke="#fff" stroke-width="1.1"/></svg><div class="t" style="left:859px;top:296px;font-size:11.5px;line-height:14px;color:#3399ff;font-weight:400;">Remove</div><svg style="position:absolute;left:837px;top:316px" width="16" height="16" viewBox="0 0 16 16"><rect x="5.2" y="5" width="5.6" height="5.6" rx="1.8" fill="#f08090" stroke="#d8101c" stroke-width="1.4"/></svg><div class="t" style="left:859px;top:318px;font-size:11.5px;line-height:14px;color:#3399ff;font-weight:400;">Disable</div><svg style="position:absolute;left:837px;top:338px" width="16" height="16" viewBox="0 0 16 16"><defs><filter id="abs" x="-30%" y="-30%" width="160%" height="160%"><feGaussianBlur stdDeviation="0.6"/></filter>
<linearGradient id="abg" x1="0" y1="0" x2="0" y2="1"><stop offset="0" stop-color="#eeeeee"/><stop offset="1" stop-color="#dcdcdc"/></linearGradient></defs><path d="M1.3 0.5 h12.4 a1.3 1.3 0 0 1 1.3 1.3 v8.4 a1.3 1.3 0 0 1 -1.3 1.3 h-3.5 l-2.5 2.8 v-2.8 h-6.4 a1.3 1.3 0 0 1 -1.3 -1.3 v-8.4 a1.3 1.3 0 0 1 1.3 -1.3z" fill="#c4c4c4" filter="url(#abs)" transform="translate(0.4,0.7)"/>
<path d="M1.3 0.2 h12.4 a1.3 1.3 0 0 1 1.3 1.3 v8.4 a1.3 1.3 0 0 1 -1.3 1.3 h-3.5 l-2.5 2.8 v-2.8 h-6.4 a1.3 1.3 0 0 1 -1.3 -1.3 v-8.4 a1.3 1.3 0 0 1 1.3 -1.3z" fill="url(#abg)"/>
<rect x="9" y="4" width="4" height="1" fill="#a8a8a8"/><rect x="9" y="6" width="4" height="1" fill="#a8a8a8"/><rect x="2" y="8" width="11" height="1" fill="#a8a8a8"/>
<rect x="1" y="1" width="7.2" height="5.8" rx="1.2" fill="#555"/><path d="M2.6 3.9 L4 5.2 L6.6 2.4" fill="none" stroke="#fff" stroke-width="1.1"/></svg><div class="t" style="left:859px;top:340px;font-size:11.5px;line-height:14px;color:#444;font-weight:400;">Resolve now...</div><svg style="position:absolute;left:837px;top:360px" width="16" height="16" viewBox="0 0 16 16"><defs><filter id="abs" x="-30%" y="-30%" width="160%" height="160%"><feGaussianBlur stdDeviation="0.6"/></filter>
<linearGradient id="abg" x1="0" y1="0" x2="0" y2="1"><stop offset="0" stop-color="#eeeeee"/><stop offset="1" stop-color="#dcdcdc"/></linearGradient></defs>
<path d="M1.3 0.5 h12.4 a1.3 1.3 0 0 1 1.3 1.3 v8.4 a1.3 1.3 0 0 1 -1.3 1.3 h-6 l-2.5 2.5 v-2.5 h-3.9 a1.3 1.3 0 0 1 -1.3 -1.3 v-8.4 a1.3 1.3 0 0 1 1.3 -1.3z" fill="#c4c4c4" filter="url(#abs)" transform="translate(0.4,0.7)"/>
<path d="M1.3 0.2 h12.4 a1.3 1.3 0 0 1 1.3 1.3 v8.4 a1.3 1.3 0 0 1 -1.3 1.3 h-6 l-2.5 2.5 v-2.5 h-3.9 a1.3 1.3 0 0 1 -1.3 -1.3 v-8.4 a1.3 1.3 0 0 1 1.3 -1.3z" fill="url(#abg)"/>
<rect x="2" y="3.9" width="11" height="1" fill="#a8a8a8"/><rect x="2" y="5.9" width="11" height="1" fill="#a8a8a8"/><rect x="2" y="8" width="11" height="1" fill="#a8a8a8"/><rect x="9" y="11.3" width="2.2" height="4.2" fill="#e85050"/><rect x="11.2" y="8.9" width="2.6" height="6.6" fill="#3a78e0"/><rect x="13.8" y="12.6" width="2" height="2.9" fill="#40a840"/></svg><div class="t" style="left:859px;top:362px;font-size:11.5px;line-height:14px;color:#3399ff;font-weight:400;">Refresh "Viewed"...</div><svg style="position:absolute;left:837px;top:382px" width="16" height="16" viewBox="0 0 16 16"><defs><linearGradient id="shg" x1="0" y1="0" x2="0" y2="1"><stop offset="0" stop-color="#ffffff"/><stop offset="1" stop-color="#e4e4e4"/></linearGradient></defs>
<rect x="1.2" y="1.5" width="13.4" height="13.8" fill="url(#shg)" stroke="#8a8a8a" stroke-width="0.9"/><rect x="0.8" y="1.2" width="14.2" height="4.8" fill="#e21a1a"/>
<rect x="3.5" y="0" width="2" height="3" rx="0.8" fill="#e8e8e8" stroke="#999" stroke-width="0.5"/><rect x="10.3" y="0" width="2" height="3" rx="0.8" fill="#e8e8e8" stroke="#999" stroke-width="0.5"/>
<text x="3.2" y="13.3" font-size="7" font-family="Liberation Sans" fill="#8a8a8a">17</text>
<path d="M11 9.5 L16 12.3 L11 15.3Z" fill="#3a74d8"/></svg><div class="t" style="left:859px;top:384px;font-size:11.5px;line-height:14px;color:#3399ff;font-weight:400;">Shift start time...</div><svg style="position:absolute;left:837px;top:404px" width="16" height="16" viewBox="0 0 16 16"><defs><radialGradient id="eyg" cx="0.45" cy="0.4" r="0.6"><stop offset="0" stop-color="#a8c8f4"/><stop offset="1" stop-color="#4a7ad0"/></radialGradient></defs>
<path d="M0.6 7.8 Q7.9 -0.5 15.2 7.8 Q7.9 15.6 0.6 7.8Z" fill="#fbfbfd" stroke="#e0a070" stroke-width="1.3"/>
<circle cx="7.9" cy="7.4" r="3.8" fill="url(#eyg)"/><circle cx="7.9" cy="6.9" r="1.1" fill="#111"/></svg><div class="t" style="left:859px;top:406px;font-size:11.5px;line-height:14px;color:#3399ff;font-weight:400;">Preview</div><svg style="position:absolute;left:837px;top:426px" width="16" height="16" viewBox="0 0 16 16"><defs><linearGradient id="emg" x1="0" y1="0" x2="0" y2="1"><stop offset="0" stop-color="#f4f8fe"/><stop offset="1" stop-color="#cfe0f6"/></linearGradient></defs>
<rect x="0.6" y="2.6" width="14.6" height="9.8" fill="url(#emg)" stroke="#3c74d0" stroke-width="1.1"/><path d="M1 3 L7.9 8.5 L14.8 3" fill="none" stroke="#9ab8e4" stroke-width="1"/><path d="M6.2 9.2 H10.3 V7 L15.8 12.2 L10.3 15.6 V13.8 H6.2Z" fill="#9ed27e" stroke="#2e8c14" stroke-width="1.1" stroke-linejoin="miter"/>
<path d="M7.5 11.5 H12" stroke="#c8eab0" stroke-width="1"/></svg><div class="t" style="left:859px;top:428px;font-size:11.5px;line-height:14px;color:#3399ff;font-weight:400;">Send as e-mail...</div><svg style="position:absolute;left:837px;top:448px" width="16" height="16" viewBox="0 0 16 16"><path d="M2.4 0.6 H11 L15.2 4.8 V14.2 a1 1 0 0 1 -1 1 H3.4 a1 1 0 0 1 -1 -1Z" fill="#dce9f8" stroke="#3c74d0" stroke-width="1.1"/>
<rect x="0.4" y="4.3" width="10.6" height="6.8" rx="1" fill="#e4e4e4" stroke="#bcbcbc" stroke-width="0.8"/><path d="M6.2 9.2 H10.3 V7 L15.8 12.2 L10.3 15.6 V13.8 H6.2Z" fill="#9ed27e" stroke="#2e8c14" stroke-width="1.1" stroke-linejoin="miter"/>
<path d="M7.5 11.5 H12" stroke="#c8eab0" stroke-width="1"/></svg><div class="t" style="left:859px;top:450px;font-size:11.5px;line-height:14px;color:#3399ff;font-weight:400;">Create template...</div><div style="position:absolute;left:834px;top:470px;width:238px;height:1px;background:#c8c8c8"></div><svg style="position:absolute;left:837px;top:477px" width="16" height="16" viewBox="0 0 16 16"><path d="M3 0.5 L7 4.5 M12 0.5 L8 4.5" stroke="#6a8ab0" stroke-width="1"/>
<defs><linearGradient id="tvg" x1="0" y1="0" x2="1" y2="1"><stop offset="0" stop-color="#a8d8ff"/><stop offset="1" stop-color="#3a90e0"/></linearGradient></defs>
<rect x="0.5" y="4.5" width="14" height="11" fill="url(#tvg)" stroke="#2a2a2a"/><rect x="0" y="12.5" width="15" height="3.5" fill="#3a3a3a"/>
<rect x="3" y="13.5" width="1" height="1" fill="#e02020"/><rect x="5" y="13.5" width="1" height="1" fill="#888"/><rect x="7" y="13.5" width="1" height="1" fill="#888"/><rect x="9" y="13.5" width="1" height="1" fill="#888"/><rect x="11" y="13.5" width="1" height="1" fill="#888"/></svg><div class="t" style="left:859px;top:479px;font-size:11.5px;line-height:14px;color:#3399ff;font-weight:400;">Watch the video-tutorials...</div><div style="position:absolute;left:830px;top:567px;width:254px;height:4px;background:#f3f3f3"></div><div style="position:absolute;left:952px;top:569px;width:2px;height:2px;background:#808080"></div><div style="position:absolute;left:956px;top:569px;width:2px;height:2px;background:#808080"></div><div style="position:absolute;left:960px;top:569px;width:2px;height:2px;background:#808080"></div><div style="position:absolute;left:830px;top:571px;width:254px;height:23px;background:#c0c0c0"></div><div class="t" style="left:833px;top:576px;font-size:11px;line-height:14px;color:#000;font-weight:700;">Information</div><div style="position:absolute;left:830px;top:594px;width:254px;height:185px;background:#ffffe1"></div><svg style="position:absolute;left:838px;top:603px" width="16" height="16" viewBox="0 0 16 16"><defs><linearGradient id="ing" x1="0" y1="0" x2="0" y2="1"><stop offset="0" stop-color="#a8c4e8"/><stop offset="1" stop-color="#5a88c8"/></linearGradient></defs>
<circle cx="7" cy="7" r="6.4" fill="url(#ing)" stroke="#3a64b0" stroke-width="0.9"/><circle cx="7" cy="7" r="5.1" fill="none" stroke="#c8dcf4" stroke-width="0.7"/>
<rect x="6.1" y="2.6" width="1.8" height="1.6" fill="#fff"/><path d="M5.4 5.3 H7.9 V9.6 H8.8 V10.8 H5.2 V9.6 H6.1 V6.4 H5.4Z" fill="#fff"/></svg><div class="t" style="left:857px;top:604px;font-size:11.5px;line-height:14px;color:#000;font-weight:400;">The message group <span style="color:#3399ff;text-decoration:underline">Default</span> contains</div><div class="t" style="left:857px;top:619px;font-size:11.5px;line-height:14px;color:#000;font-weight:400;">unpublished changes.</div><div style="position:absolute;left:1085px;top:187px;width:1px;height:480px;background:#1a1a1a"></div><div style="position:absolute;left:1081px;top:790px;width:2px;height:2px;background:#fff"></div><div style="position:absolute;left:1080px;top:789px;width:2px;height:2px;background:#888"></div><div style="position:absolute;left:1077px;top:794px;width:2px;height:2px;background:#fff"></div><div style="position:absolute;left:1076px;top:793px;width:2px;height:2px;background:#888"></div><div style="position:absolute;left:1081px;top:794px;width:2px;height:2px;background:#fff"></div><div style="position:absolute;left:1080px;top:793px;width:2px;height:2px;background:#888"></div><div style="position:absolute;left:1073px;top:798px;width:2px;height:2px;background:#fff"></div><div style="position:absolute;left:1072px;top:797px;width:2px;height:2px;background:#888"></div><div style="position:absolute;left:1077px;top:798px;width:2px;height:2px;background:#fff"></div><div style="position:absolute;left:1076px;top:797px;width:2px;height:2px;background:#888"></div><div style="position:absolute;left:1081px;top:798px;width:2px;height:2px;background:#fff"></div><div style="position:absolute;left:1080px;top:797px;width:2px;height:2px;background:#888"></div><div style="position:absolute;left:378px;top:315px;width:330px;height:177px;box-sizing:border-box;border:1px solid #1883d7;background:#fff;box-shadow:0 0 10px 1px rgba(0,0,0,0.18), 3px 5px 16px 1px rgba(0,0,0,0.2)"></div><div style="position:absolute;left:379px;top:444px;width:328px;height:47px;background:#f0f0f0"></div><div class="t" style="left:382px;top:321px;font-size:11.5px;line-height:14px;color:#000;font-weight:400;">Preview</div><div class="t" style="left:493px;top:360px;font-size:11.5px;line-height:14px;color:#000;font-weight:400;">Showing preview...</div><svg style="position:absolute;left:394px;top:384px" width="26" height="26" viewBox="0 0 26 26"><path d="M3.5 0.8 Q0 2 2 8 Q6 18 17 23.5 Q22 25 23 21.5 Q22.5 18.5 18 15" fill="#fbe6bc" stroke="#e8a840" stroke-width="1.1"/>
<path d="M5.9 0 H22 a1.6 1.6 0 0 1 1.6 1.6 V13.7 a1.6 1.6 0 0 1 -1.6 1.6 H8.2 L4.3 18.6 V1.6 a1.6 1.6 0 0 1 1.6 -1.6z" fill="#2196f3"/>
<rect x="8.1" y="4.2" width="12" height="1.7" fill="#fff"/><rect x="8.1" y="7.2" width="12" height="1.7" fill="#fff"/><rect x="8.1" y="10.2" width="12" height="1.7" fill="#fff"/></svg><div class="t" style="left:428px;top:382px;font-size:11.5px;line-height:14px;color:#000;font-weight:700;">Tip</div><div class="t" style="left:428px;top:399px;font-size:11.5px;line-height:14px;color:#000;font-weight:400;">Look out for this symbol near the system clock.</div><svg style="position:absolute;left:389px;top:462px" width="16" height="16" viewBox="0 0 16 16"><defs><linearGradient id="hlg" x1="0" y1="0" x2="0" y2="1"><stop offset="0" stop-color="#7aa2d8"/><stop offset="1" stop-color="#3a68b0"/></linearGradient></defs>
<circle cx="7" cy="7" r="6.6" fill="#e4eefa" stroke="#8aaede" stroke-width="0.8"/><circle cx="7" cy="7" r="5.1" fill="url(#hlg)"/>
<text x="7" y="10.2" text-anchor="middle" font-size="9" font-weight="700" font-family="Liberation Sans" fill="#fff">?</text></svg><div class="t" style="left:407px;top:462px;font-size:11.5px;line-height:14px;color:#3399ff;font-weight:400;">Help</div><div style="position:absolute;left:611px;top:457px;width:83px;height:21px;box-sizing:border-box;border:1px solid #adadad;background:#e1e1e1"></div><div class="t" style="left:635px;top:461px;font-size:11.5px;line-height:14px;color:#000;font-weight:400;">Cancel</div>
</body></html>
